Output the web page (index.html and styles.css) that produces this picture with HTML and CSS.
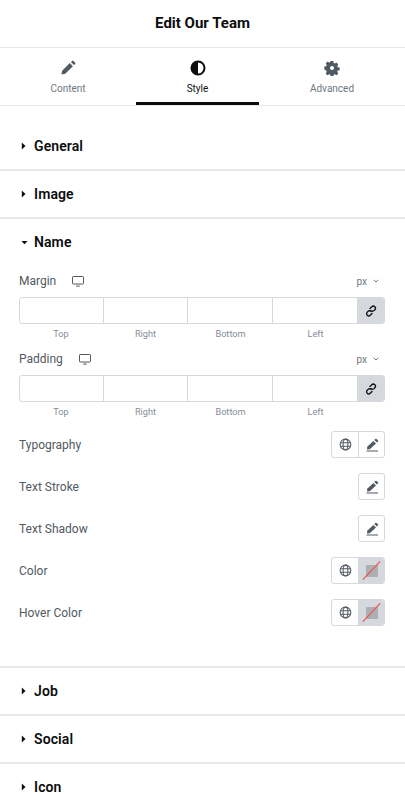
FILE: index.html
```html
<!DOCTYPE html>
<html lang="en">
<head>
<meta charset="utf-8">
<title>Edit Our Team</title>
<link rel="stylesheet" href="styles.css">
</head>
<body>
<svg class="defs" aria-hidden="true" width="0" height="0">
  <defs>
    <symbol id="i-desktop" viewBox="0 0 12 11"><path d="M1.2 0.5h9.6a.7.7 0 0 1 .7.7v6.1a.7.7 0 0 1-.7.7H1.2a.7.7 0 0 1-.7-.7V1.2a.7.7 0 0 1 .7-.7z" fill="none" stroke="currentColor" stroke-width="1"/><path d="M4.2 9.600h3.600v1H4.200z" fill="currentColor"/></symbol>
    <symbol id="i-link" viewBox="0 0 12 12"><g fill="none" stroke="currentColor" stroke-width="1.300" stroke-linecap="round"><path d="M5 3.500 6.800 1.800a2.100 2.100 0 0 1 3 3L9 5.600a2.100 2.100 0 0 1-3 0"/><path d="M7 8.500 5.200 10.200a2.100 2.100 0 0 1-3-3L3 6.400a2.100 2.100 0 0 1 3 0"/></g></symbol>
    <symbol id="i-globe" viewBox="0 0 14 14"><g fill="none" stroke="currentColor" stroke-width="1.100"><circle cx="7" cy="7" r="5.800"/><ellipse cx="7" cy="7" rx="2.600" ry="5.800"/><path d="M1.400 5h11.200M1.400 9h11.200"/></g></symbol>
    <symbol id="i-edit" viewBox="0 0 14 14"><path d="M8.400 2.900 11 5.500 4.800 11.200 2 11.400 2.200 8.800z" fill="currentColor"/><path d="M9.300 2 10.300 1a.9.9 0 0 1 1.300 0l1.300 1.300a.9.9 0 0 1 0 1.300L11.900 4.600z" fill="currentColor"/><path d="M1.500 13h11.500" stroke="currentColor" stroke-width="1.200"/></symbol>
    <symbol id="i-caret-r" viewBox="0 0 5 8"><path d="M.8.500 4.500 4 .8 7.500z" fill="currentColor"/></symbol>
  </defs>
</svg>
<main class="panel">
  <header class="title">Edit Our Team</header>
  <nav class="tabs">
    <div class="tab">
      <svg class="tab-icon" viewBox="0 0 16 16"><path d="M9.800 3.100 12.900 6.200 5.300 13.800 1.400 14.600 2.200 10.700z" fill="currentColor"/><path d="M10.900 2 12.100.9a1 1 0 0 1 1.400 0l1.600 1.600a1 1 0 0 1 0 1.400L14 5.100z" fill="currentColor"/></svg>
      <span>Content</span>
    </div>
    <div class="tab active">
      <svg class="tab-icon" viewBox="0 0 16 16"><circle cx="8" cy="8" r="6.500" fill="#fff" stroke="currentColor" stroke-width="2"/><path d="M8 1.500a6.500 6.500 0 0 0 0 13z" fill="currentColor"/></svg>
      <span>Style</span>
    </div>
    <div class="tab">
      <svg class="tab-icon" viewBox="0 0 16 16"><path fill-rule="evenodd" fill="currentColor" d="M6.700 1h2.600l.4 1.900 1.100.5 1.700-1 1.800 1.900-1 1.600.5 1.200 1.900.4v2.600l-1.900.4-.5 1.200 1 1.600-1.800 1.900-1.700-1-1.100.5-.4 1.900H6.700l-.4-1.900-1.100-.5-1.700 1-1.800-1.900 1-1.600-.5-1.200L.3 9.100V6.500l1.900-.4.500-1.200-1-1.600 1.800-1.900 1.700 1 1.100-.5zM8 5.900a2 2 0 1 0 0 4 2 2 0 0 0 0-4z" transform="translate(0 .1)"/></svg>
      <span>Advanced</span>
    </div>
  </nav>

  <div class="sections">
    <section class="section">
      <h2 class="sec-head"><svg class="caret"><use href="#i-caret-r"/></svg>General</h2>
    </section>
    <section class="section">
      <h2 class="sec-head"><svg class="caret"><use href="#i-caret-r"/></svg>Image</h2>
    </section>
    <section class="section open">
      <h2 class="sec-head"><svg class="caret-down" viewBox="0 0 8 5"><path d="M.5.800h7L4 4.500z" fill="currentColor"/></svg>Name</h2>
      <div class="sec-body">
        <div class="dim-block">
          <div class="dim-head">
            <span class="label">Margin</span>
            <svg class="device"><use href="#i-desktop"/></svg>
            <span class="unit">px<svg class="chev" viewBox="0 0 6 4"><path d="M.8.800 3 3 5.200.8" fill="none" stroke="currentColor"/></svg></span>
          </div>
          <div class="dims">
            <div class="dim"></div><div class="dim"></div><div class="dim"></div><div class="dim"></div>
            <div class="link"><svg><use href="#i-link"/></svg></div>
          </div>
          <div class="dim-labels"><span>Top</span><span>Right</span><span>Bottom</span><span>Left</span></div>
        </div>
        <div class="dim-block">
          <div class="dim-head">
            <span class="label">Padding</span>
            <svg class="device"><use href="#i-desktop"/></svg>
            <span class="unit">px<svg class="chev" viewBox="0 0 6 4"><path d="M.8.800 3 3 5.200.8" fill="none" stroke="currentColor"/></svg></span>
          </div>
          <div class="dims">
            <div class="dim"></div><div class="dim"></div><div class="dim"></div><div class="dim"></div>
            <div class="link"><svg><use href="#i-link"/></svg></div>
          </div>
          <div class="dim-labels"><span>Top</span><span>Right</span><span>Bottom</span><span>Left</span></div>
        </div>
        <div class="controls">
          <div class="control">
            <span class="label">Typography</span>
            <div class="btns"><span class="btn"><svg class="globe"><use href="#i-globe"/></svg></span><span class="btn"><svg><use href="#i-edit"/></svg></span></div>
          </div>
          <div class="control">
            <span class="label">Text Stroke</span>
            <div class="btns"><span class="btn"><svg><use href="#i-edit"/></svg></span></div>
          </div>
          <div class="control">
            <span class="label">Text Shadow</span>
            <div class="btns"><span class="btn"><svg><use href="#i-edit"/></svg></span></div>
          </div>
          <div class="control">
            <span class="label">Color</span>
            <div class="btns swatch-group"><span class="btn"><svg class="globe"><use href="#i-globe"/></svg></span><span class="btn swatch"><i class="chip"></i><svg class="slash" viewBox="0 0 26 25"><path d="M4 22 22 3" stroke="#ef4f4f" stroke-width="1.200"/></svg></span></div>
          </div>
          <div class="control">
            <span class="label">Hover Color</span>
            <div class="btns swatch-group"><span class="btn"><svg class="globe"><use href="#i-globe"/></svg></span><span class="btn swatch"><i class="chip"></i><svg class="slash" viewBox="0 0 26 25"><path d="M4 22 22 3" stroke="#ef4f4f" stroke-width="1.200"/></svg></span></div>
          </div>
        </div>
      </div>
    </section>
    <section class="section">
      <h2 class="sec-head"><svg class="caret"><use href="#i-caret-r"/></svg>Job</h2>
    </section>
    <section class="section">
      <h2 class="sec-head"><svg class="caret"><use href="#i-caret-r"/></svg>Social</h2>
    </section>
    <section class="section">
      <h2 class="sec-head"><svg class="caret"><use href="#i-caret-r"/></svg>Icon</h2>
    </section>
  </div>
</main>
</body>
</html>
```
FILE: styles.css
```css
* { box-sizing: border-box; }
html, body { margin: 0; padding: 0; background: #fff; }
body { font-family: Roboto, "Liberation Sans", sans-serif; color: #0c0d0e; height: 803px; overflow: hidden; }
.defs { position: absolute; }
.panel { width: 405px; }
.title {
  height: 48px; padding-bottom: 2px; display: flex; align-items: center; justify-content: center;
  font-size: 15px; font-weight: 700; color: #0c0d0e;
  border-bottom: 1px solid #e6e8ea;
}
.tabs {
  display: grid; grid-template-columns: 136px 123px 1fr; height: 58px;
  border-bottom: 1px solid #e6e8ea;
}
.tab {
  display: flex; flex-direction: column; align-items: center; padding-top: 12px;
  font-size: 10px; line-height: 13px; color: #6d7882; height: 57px;
}
.tab-icon { width: 16px; height: 16px; color: #515962; margin-bottom: 6px; }
.tab.active { color: #0c0d0e; border-bottom: 3px solid #0c0d0e; }
.tab.active .tab-icon { color: #0c0d0e; }
.sections { padding-top: 16px; }
.section { border-bottom: 2px solid #e6e8ea; }
.sec-head {
  margin: 0; height: 46px; display: flex; align-items: center; padding-left: 21px;
  font-size: 14px; font-weight: 600; color: #0c0d0e; letter-spacing: .1px;
}
.section:first-child .sec-head { height: 47px; }
.caret { width: 5px; height: 8px; margin-right: 8px; color: #0c0d0e; }
.caret-down { width: 7px; height: 5px; margin-right: 6px; color: #0c0d0e; }
.sec-body { padding: 8px 20px 40px 19px; }
.label { font-size: 12px; color: #515962; }
.dim-head { display: flex; align-items: center; height: 16px; margin-bottom: 8px; }
.device { width: 12px; height: 11px; margin-left: 16px; color: #515962; }
.unit { margin-left: auto; margin-right: 6px; font-size: 10px; color: #6d7882; display: flex; align-items: center; gap: 6px; }
.chev { width: 6px; height: 4px; color: #6d7882; }
.dims {
  display: grid; grid-template-columns: 84px 84px 85px 84px 1fr; height: 27px;
  border: 1px solid #d5d8dc; border-radius: 3px; overflow: hidden;
}
.dim { border-right: 1px solid #d5d8dc; }
.dim:nth-child(4) { border-right: 0; }
.link { background: #d5d8dc; display: flex; align-items: center; justify-content: center; color: #0c0d0e; }
.link svg { width: 12px; height: 12px; }
.dim-labels {
  display: grid; grid-template-columns: 84px 85px 85px 85px; margin: 4px 0 11px;
  font-size: 9.200px; line-height: 12px; color: #848d99; text-align: center;
}
.controls { margin-top: 13px; display: flex; flex-direction: column; gap: 15px; }
.control { display: flex; align-items: center; justify-content: space-between; height: 27px; }
.btns { display: flex; border: 1px solid #d5d8dc; border-radius: 3px; overflow: hidden; height: 27px; }
.btn { width: 26px; height: 25px; display: flex; align-items: center; justify-content: center; color: #515962; position: relative; }
.btn:only-child { width: 25px; }
.btn + .btn { border-left: 1px solid #d5d8dc; }
.btn svg { width: 14px; height: 14px; }
.btn .globe { width: 13px; height: 13px; }
.swatch { background: #d5d8dc; }
.chip { width: 12px; height: 12px; background: #adafb2; border-radius: 1px; }
.btn .slash { position: absolute; inset: 0; width: 100%; height: 100%; }
```
